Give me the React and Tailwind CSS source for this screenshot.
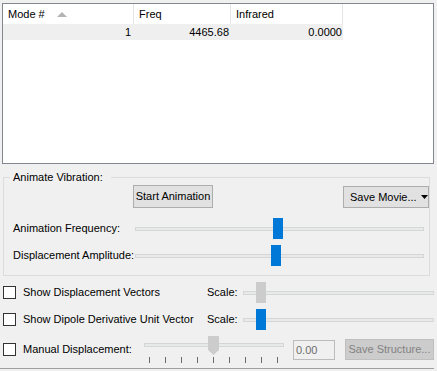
import React from "react";

const FONT = { fontFamily: '"Liberation Sans", Arial, sans-serif' };

function Thumb({ left, top, blue }) {
  return (
    <div
      className={"absolute w-[10px] h-[21px] " + (blue ? "bg-[#0078d7]" : "bg-[#cccccc]")}
      style={{ left, top }}
    />
  );
}

function Slider({ width, trackLeft, trackRight, thumbLeft, blue }) {
  return (
    <div className="relative h-[21px] shrink-0" style={{ width }}>
      <div
        className="absolute top-[9px] h-[4px] bg-[#e7eaea] border border-[#d6d6d6]"
        style={{ left: trackLeft, right: trackRight }}
      />
      <Thumb left={thumbLeft} top={0} blue={blue} />
    </div>
  );
}

function Checkbox() {
  return <div className="w-[13px] h-[13px] border border-[#333333] bg-white shrink-0" />;
}

export default function App() {
  const ticks = [10, 26, 42, 58, 74, 90, 106, 122, 138];
  return (
    <div className="w-[437px] h-[371px] bg-[#f0f0f0] overflow-hidden text-[11px] text-black whitespace-nowrap" style={FONT}>
      {/* list view */}
      <div className="mt-[3px] ml-[2px] w-[432px] h-[161px] border border-[#828790] bg-white">
        <div className="flex h-[20px]">
          <div className="w-[131px] border-r border-[#e5e5e5] flex items-center pl-[5px]">
            <span>Mode #</span>
            <svg className="ml-[12px]" width="10" height="5" viewBox="0 0 10 5">
              <polygon points="0,5 5,0 10,5" fill="#b4b4b4" />
            </svg>
          </div>
          <div className="w-[97px] border-r border-[#e5e5e5] flex items-center pl-[5px]">Freq</div>
          <div className="w-[112px] border-r border-[#e5e5e5] flex items-center pl-[5px]">Infrared</div>
        </div>
        <div className="flex h-[16px] w-[340px] bg-[#efefef] items-center">
          <div className="w-[131px] text-right pr-[3px]">1</div>
          <div className="w-[97px] text-right pr-[2px]">4465.68</div>
          <div className="w-[112px] text-right pr-[1px]">0.0000</div>
        </div>
      </div>

      {/* group box */}
      <fieldset className="mt-[7px] ml-[3px] w-[427px] border border-[#dcdcdc]">
        <legend className="ml-[6px] pl-[3px] pr-[8px] leading-[13px]">Animate Vibration:</legend>
        <div className="flex mt-[1px]">
          <button className="ml-[129px] w-[80px] h-[23px] bg-[#e1e1e1] border border-[#adadad] leading-none">
            Start Animation
          </button>
          <button className="ml-auto mt-[1px] w-[86px] h-[22px] bg-[#e1e1e1] border border-[#adadad] flex items-center pl-[6px] leading-none">
            <span>Save Movie...</span>
            <svg className="ml-[4px]" width="7" height="4" viewBox="0 0 7 4">
              <polygon points="0,0 7,0 3.5,4" fill="#000" />
            </svg>
          </button>
        </div>
        <div className="flex items-center mt-[10px] h-[21px]">
          <span className="pl-[9px] w-[126px] shrink-0">Animation Frequency:</span>
          <Slider width={298} trackLeft={5} trackRight={4} thumbLeft={143} blue />
        </div>
        <div className="flex items-center mt-[6px] mb-[9px] h-[21px]">
          <span className="pl-[9px] w-[126px] shrink-0">Displacement Amplitude:</span>
          <Slider width={298} trackLeft={5} trackRight={4} thumbLeft={141} blue />
        </div>
      </fieldset>

      {/* options */}
      <div className="flex items-center mt-[6px] h-[21px]">
        <div className="ml-[3px] w-[204px] shrink-0 flex items-center">
          <Checkbox />
          <span className="ml-[7px]">Show Displacement Vectors</span>
        </div>
        <span className="w-[31px] shrink-0">Scale:</span>
        <Slider width={199} trackLeft={5} trackRight={3} thumbLeft={18} />
      </div>
      <div className="flex items-center mt-[6px] h-[21px]">
        <div className="ml-[3px] w-[204px] shrink-0 flex items-center">
          <Checkbox />
          <span className="ml-[7px]">Show Dipole Derivative Unit Vector</span>
        </div>
        <span className="w-[31px] shrink-0">Scale:</span>
        <Slider width={199} trackLeft={5} trackRight={3} thumbLeft={18} blue />
      </div>
      <div className="flex items-center mt-[9px] h-[21px]">
        <div className="ml-[3px] w-[136px] shrink-0 flex items-center">
          <Checkbox />
          <span className="ml-[7px]">Manual Displacement:</span>
        </div>
        <div className="relative w-[149px] h-[21px] shrink-0">
          <div className="absolute top-[4px] left-[5px] right-[4px] h-[4px] bg-[#e7eaea] border border-[#d6d6d6]" />
          <svg className="absolute left-[69px] top-[-3px]" width="11" height="19" viewBox="0 0 11 19">
            <polygon points="0,0 11,0 11,14 5.5,19 0,14" fill="#cccccc" />
          </svg>
          {ticks.map((t) => (
            <div key={t} className="absolute top-[18px] w-[1px] h-[6px] bg-[#6d6d6d]" style={{ left: t }} />
          ))}
        </div>
        <div className="ml-[5px] mt-[1px] w-[42px] h-[20px] shrink-0 border border-[#bcbcbc] text-[#6d6d6d] flex items-center pl-[2px]">
          0.00
        </div>
        <button className="ml-[10px] w-[89px] h-[21px] shrink-0 bg-[#cccccc] border border-[#bfbfbf] text-[#838383] leading-none">
          Save Structure...
        </button>
      </div>
      <div className="mt-[8px] w-[434px] h-[1px] bg-[#a0a0a0]" />
    </div>
  );
}
